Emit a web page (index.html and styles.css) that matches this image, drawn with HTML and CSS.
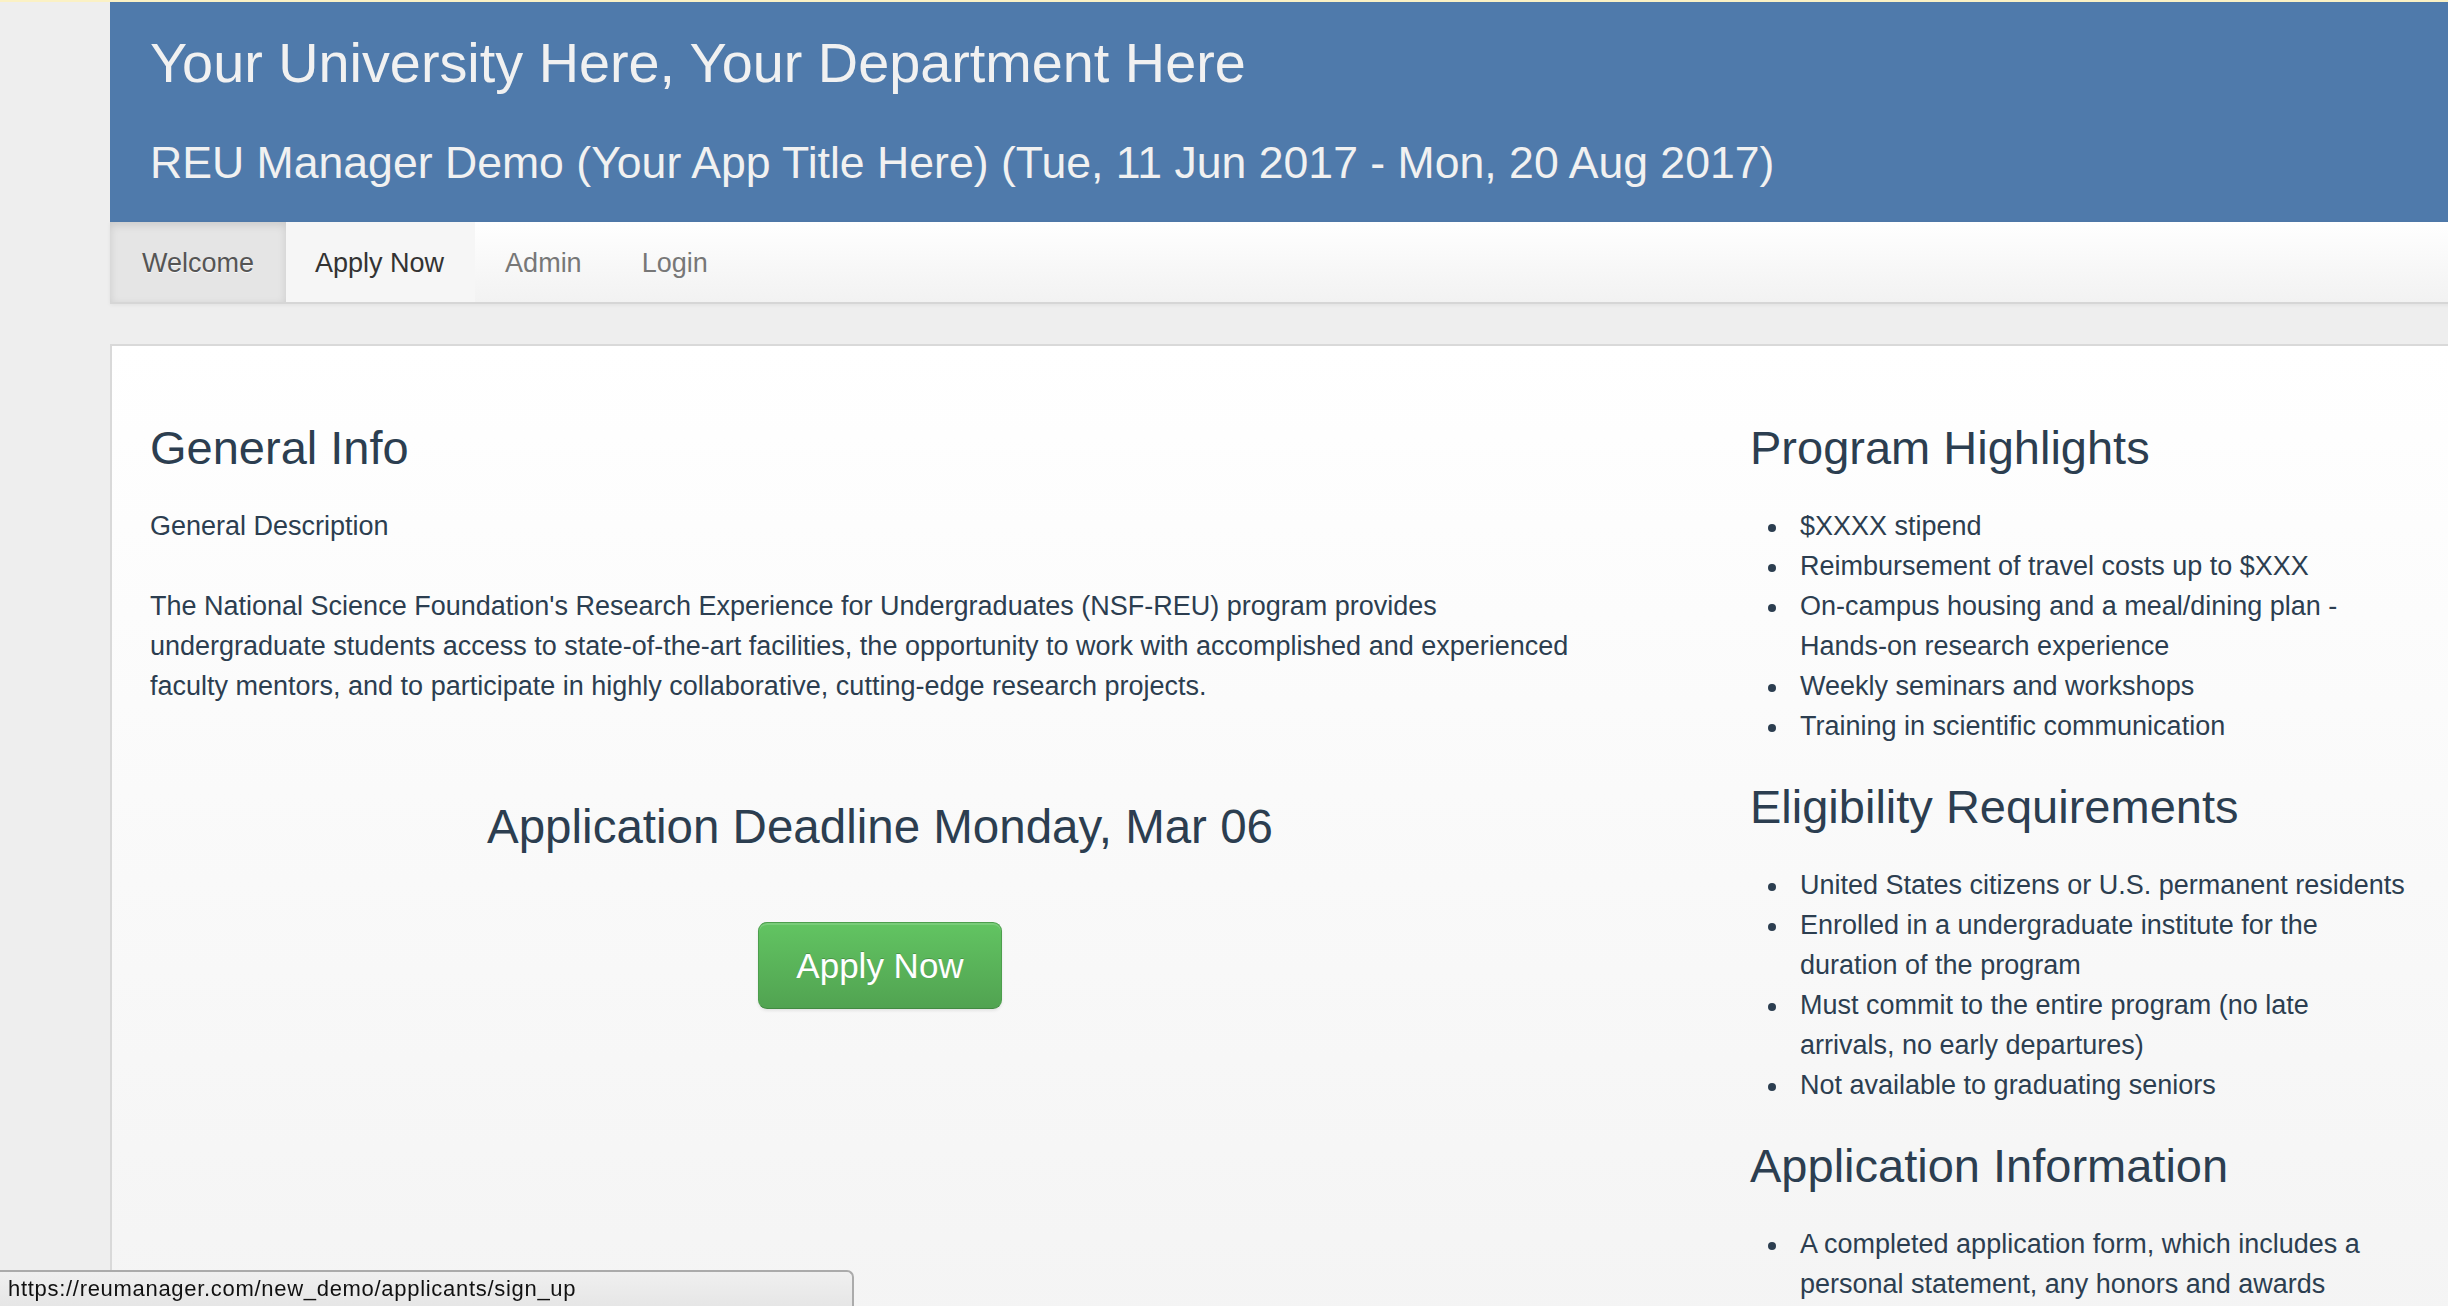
FILE: index.html
```html
<!DOCTYPE html>
<html lang="en">
<head>
<meta charset="utf-8">
<title>REU Manager Demo</title>
<link rel="stylesheet" href="styles.css">
</head>
<body>
<div class="topline"></div>
<div class="page">
  <header class="masthead">
    <h1 class="site-title">Your University Here, Your Department Here</h1>
    <h2 class="app-title">REU Manager Demo (Your App Title Here) (Tue, 11 Jun 2017 - Mon, 20 Aug 2017)</h2>
  </header>
  <nav class="navbar">
    <a class="nav-item active" href="#">Welcome</a>
    <a class="nav-item hover" href="#">Apply Now</a>
    <a class="nav-item" href="#">Admin</a>
    <a class="nav-item" href="#">Login</a>
  </nav>
  <main class="card">
    <div class="columns">
      <section class="col-main">
        <h3 class="heading">General Info</h3>
        <p class="lead">General Description</p>
        <p class="text">The National Science Foundation's Research Experience for Undergraduates (NSF-REU) program provides undergraduate students access to state-of-the-art facilities, the opportunity to work with accomplished and experienced faculty mentors, and to participate in highly collaborative, cutting-edge research projects.</p>
        <div class="deadline">
          <h3 class="heading">Application Deadline Monday, Mar 06</h3>
          <a class="btn-apply" href="#">Apply Now</a>
        </div>
      </section>
      <aside class="col-side">
        <h3 class="heading">Program Highlights</h3>
        <ul class="list">
          <li>$XXXX stipend</li>
          <li>Reimbursement of travel costs up to $XXX</li>
          <li>On-campus housing and a meal/dining plan - Hands-on research experience</li>
          <li>Weekly seminars and workshops</li>
          <li>Training in scientific communication</li>
        </ul>
        <h3 class="heading">Eligibility Requirements</h3>
        <ul class="list">
          <li>United States citizens or U.S. permanent residents</li>
          <li>Enrolled in a undergraduate institute for the duration of the program</li>
          <li>Must commit to the entire program (no late arrivals, no early departures)</li>
          <li>Not available to graduating seniors</li>
        </ul>
        <h3 class="heading">Application Information</h3>
        <ul class="list">
          <li>A completed application form, which includes a personal statement, any honors and awards received, and a list of relevant coursework</li>
          <li>Two letters of recommendation</li>
        </ul>
      </aside>
    </div>
  </main>
</div>
<div class="status-bubble">https://reumanager.com/new_demo/applicants/sign_up</div>
</body>
</html>
```
FILE: styles.css
```css
html, body {
  margin: 0;
  padding: 0;
}
body {
  background: #eeeeee;
  font-family: "Liberation Sans", Arial, Helvetica, sans-serif;
  color: #2c3e50;
  overflow: hidden;
  height: 1306px;
}
.topline {
  height: 2px;
  background: #fbf1c4;
}
.page {
  margin-left: 110px;
  width: 2400px;
}
.masthead {
  background: #4f7aab;
  height: 220px;
  box-sizing: border-box;
  padding: 28px 0 0 40px;
  color: #f1f1f1;
}
.site-title {
  margin: 0;
  font-weight: normal;
  font-size: 55.8px;
  line-height: 66px;
}
.app-title {
  margin: 40px 0 0;
  font-weight: normal;
  font-size: 44.6px;
  line-height: 53px;
}
.navbar {
  display: flex;
  height: 80px;
  background: linear-gradient(#ffffff, #f2f2f2);
  border-bottom: 2px solid #d6d6d6;
  box-shadow: 0 1px 4px rgba(0, 0, 0, 0.06);
}
.nav-item {
  display: block;
  padding: 2px 30px 0;
  line-height: 78px;
  font-size: 27px;
  color: #777777;
  text-decoration: none;
}
.nav-item.active {
  background: #e5e5e5;
  color: #555555;
  box-shadow: inset 0 3px 8px rgba(0, 0, 0, 0.12);
  text-shadow: 0 1px 0 rgba(255, 255, 255, 0.8);
  padding-left: 32px;
  padding-right: 32px;
}
.nav-item.hover {
  background: #f6f6f6;
  color: #333333;
  padding-left: 29px;
  padding-right: 31px;
}
.card {
  display: block;
  margin-top: 40px;
  border-top: 2px solid #d9d9d9;
  border-left: 2px solid #d9d9d9;
  background: linear-gradient(#ffffff, #f1f1f1);
  height: 1250px;
  box-sizing: border-box;
  padding: 76px 0 0 38px;
}
.columns {
  display: grid;
  grid-template-columns: 1460px 658px;
  column-gap: 140px;
}
.heading {
  margin: 0 0 32px;
  font-weight: normal;
  font-size: 47px;
  line-height: 52px;
  color: #2c3e50;
}
.lead, .text {
  margin: 0;
  font-size: 27px;
  line-height: 40px;
}
.lead {
  margin-bottom: 40px;
}
.deadline {
  margin-top: 95px;
  display: flex;
  flex-direction: column;
  align-items: center;
}
.deadline .heading {
  font-size: 47.5px;
  margin-bottom: 69px;
}
.btn-apply {
  display: block;
  padding: 20px 37px;
  font-size: 35px;
  line-height: 45px;
  color: #ffffff;
  text-decoration: none;
  background: linear-gradient(#62c462, #51a351);
  border: 1px solid #4d9e4d;
  border-bottom-color: #428a42;
  border-radius: 9px;
  text-shadow: 0 -1px 0 rgba(0, 0, 0, 0.2);
  box-shadow: inset 0 2px 0 rgba(255, 255, 255, 0.15), 0 2px 3px rgba(0, 0, 0, 0.08);
}
.list {
  margin: 0 0 35px;
  padding: 0 0 0 50px;
  list-style: none;
  font-size: 27px;
  line-height: 40px;
}
.list li {
  position: relative;
}
.list li::before {
  content: "";
  position: absolute;
  left: -32px;
  top: 18px;
  width: 8px;
  height: 8px;
  border-radius: 50%;
  background: #2c3e50;
}
.status-bubble {
  position: fixed;
  left: 0;
  bottom: 0;
  width: 844px;
  height: 34px;
  box-sizing: content-box;
  padding-left: 8px;
  background: linear-gradient(#f0f0f0, #e6e6e6);
  border-top: 2px solid #ababab;
  border-right: 2px solid #ababab;
  border-top-right-radius: 7px;
  font-size: 22px;
  letter-spacing: 0.7px;
  line-height: 34px;
  color: #111111;
}
```
